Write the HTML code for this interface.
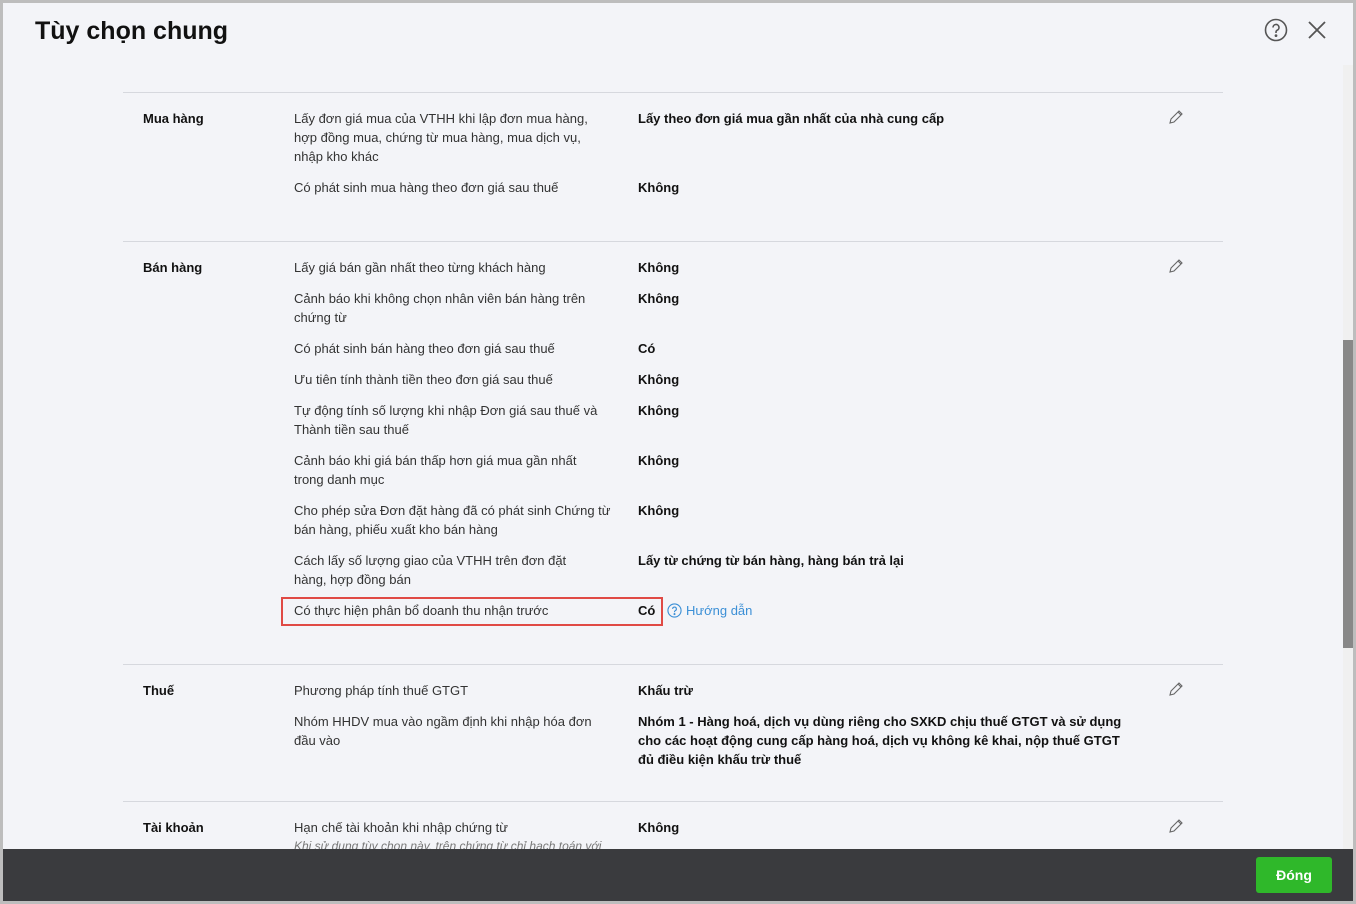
<!DOCTYPE html>
<html><head><meta charset="utf-8"><style>
*{margin:0;padding:0;box-sizing:border-box}
body{width:1356px;height:904px;overflow:hidden;background:#bdbdbd;font-family:"Liberation Sans","Noto Sans CJK SC",sans-serif;font-size:13px;color:#212121;position:relative}
.win{position:absolute;left:3px;top:3px;width:1350px;height:898px;background:#f3f4f8;overflow:hidden}
h1{position:absolute;left:32px;top:14px;font-size:25px;font-weight:bold;color:#111}
.t{position:absolute;line-height:19px}
.d{left:291px;width:318px;color:#333}
.v{left:635px;font-weight:bold;color:#111}
.l{left:140px;font-weight:bold;color:#111}
.hr{position:absolute;left:120px;width:1100px;height:1px;background:#d6d8de}
.pen{position:absolute;left:1165px}
.sb{position:absolute;left:1340px;top:62px;width:10px;height:840px;background:#f0f0f0}
.th{position:absolute;left:1340px;top:337px;width:10px;height:308px;background:#888}
.foot{position:absolute;left:0;top:846px;width:1350px;height:52px;background:#3a3b3e}
.btn{position:absolute;left:1253px;top:854px;width:76px;height:36px;background:#2fb82a;border-radius:3px;color:#fff;font-weight:bold;font-size:14px;text-align:center;line-height:36px}
</style></head><body><div class="win">
<h1>Tùy chọn chung</h1>
<svg style="position:absolute;left:1261px;top:15px" width="24" height="24" viewBox="0 0 24 24" fill="none" stroke="#555" stroke-width="1.6"><circle cx="12" cy="12" r="10.5"/><path d="M9 9.5a3 3 0 1 1 4 2.8c-.8.4-1 1-1 2v.7"/><circle cx="12" cy="17.6" r=".6" fill="#555"/></svg>
<svg style="position:absolute;left:1304px;top:17px" width="20" height="20" viewBox="0 0 20 20" stroke="#555" stroke-width="1.8"><path d="M2 2L18 18M18 2L2 18"/></svg>
<div class="sb"></div><div class="th"></div>

<div class="hr" style="top:89px"></div>
<div class="t l" style="top:106px">Mua hàng</div>
<div class="t d" style="top:106px;width:312px">Lấy đơn giá mua của VTHH khi lập đơn mua hàng, hợp đồng mua, chứng từ mua hàng, mua dịch vụ, nhập kho khác</div>
<div class="t v" style="top:106px">Lấy theo đơn giá mua gần nhất của nhà cung cấp</div>
<div class="t d" style="top:175px">Có phát sinh mua hàng theo đơn giá sau thuế</div>
<div class="t v" style="top:175px">Không</div>

<div class="hr" style="top:238px"></div>
<div class="t l" style="top:255px">Bán hàng</div>
<div class="t d" style="top:255px">Lấy giá bán gần nhất theo từng khách hàng</div><div class="t v" style="top:255px">Không</div>
<div class="t d" style="top:286px">Cảnh báo khi không chọn nhân viên bán hàng trên chứng từ</div><div class="t v" style="top:286px">Không</div>
<div class="t d" style="top:336px">Có phát sinh bán hàng theo đơn giá sau thuế</div><div class="t v" style="top:336px">Có</div>
<div class="t d" style="top:367px">Ưu tiên tính thành tiền theo đơn giá sau thuế</div><div class="t v" style="top:367px">Không</div>
<div class="t d" style="top:398px">Tự động tính số lượng khi nhập Đơn giá sau thuế và Thành tiền sau thuế</div><div class="t v" style="top:398px">Không</div>
<div class="t d" style="top:448px;width:300px">Cảnh báo khi giá bán thấp hơn giá mua gần nhất trong danh mục</div><div class="t v" style="top:448px">Không</div>
<div class="t d" style="top:498px">Cho phép sửa Đơn đặt hàng đã có phát sinh Chứng từ bán hàng, phiếu xuất kho bán hàng</div><div class="t v" style="top:498px">Không</div>
<div class="t d" style="top:548px;width:300px">Cách lấy số lượng giao của VTHH trên đơn đặt hàng, hợp đồng bán</div><div class="t v" style="top:548px">Lấy từ chứng từ bán hàng, hàng bán trả lại</div>
<div style="position:absolute;left:278px;top:594px;width:382px;height:29px;border:2px solid #e04a45"></div>
<div class="t d" style="top:598px;width:340px">Có thực hiện phân bổ doanh thu nhận trước</div><div class="t v" style="top:598px">Có</div>
<svg style="position:absolute;left:664px;top:600px" width="15" height="15" viewBox="0 0 16 16" fill="none" stroke="#3b8fd6" stroke-width="1.2"><circle cx="8" cy="8" r="7"/><path d="M6 6.3a2 2 0 1 1 2.7 1.9c-.5.3-.7.6-.7 1.3v.4"/><circle cx="8" cy="11.8" r=".5" fill="#3b8fd6"/></svg>
<div class="t" style="top:598px;left:683px;color:#3b8fd6">Hướng dẫn</div>

<div class="hr" style="top:661px"></div>
<div class="t l" style="top:678px">Thuế</div>
<div class="t d" style="top:678px">Phương pháp tính thuế GTGT</div><div class="t v" style="top:678px">Khấu trừ</div>
<div class="t d" style="top:709px">Nhóm HHDV mua vào ngầm định khi nhập hóa đơn đầu vào</div>
<div class="t v" style="top:709px;width:490px">Nhóm 1 - Hàng hoá, dịch vụ dùng riêng cho SXKD chịu thuế GTGT và sử dụng cho các hoạt động cung cấp hàng hoá, dịch vụ không kê khai, nộp thuế GTGT đủ điều kiện khấu trừ thuế</div>

<div class="hr" style="top:798px"></div>
<div class="t l" style="top:815px">Tài khoản</div>
<div class="t d" style="top:815px">Hạn chế tài khoản khi nhập chứng từ</div><div class="t v" style="top:815px">Không</div>
<div class="t d" style="top:834px;width:400px;font-style:italic;color:#777;font-size:12px">Khi sử dụng tùy chọn này, trên chứng từ chỉ hạch toán với</div>

<svg class="pen" style="top:106px" width="16" height="16" viewBox="0 0 16 16" fill="none" stroke="#666" stroke-width="1.1"><path d="M2 14l1-4 8-8 3 3-8 8z M10 3l3 3"/></svg>
<svg class="pen" style="top:255px" width="16" height="16" viewBox="0 0 16 16" fill="none" stroke="#666" stroke-width="1.1"><path d="M2 14l1-4 8-8 3 3-8 8z M10 3l3 3"/></svg>
<svg class="pen" style="top:678px" width="16" height="16" viewBox="0 0 16 16" fill="none" stroke="#666" stroke-width="1.1"><path d="M2 14l1-4 8-8 3 3-8 8z M10 3l3 3"/></svg>
<svg class="pen" style="top:815px" width="16" height="16" viewBox="0 0 16 16" fill="none" stroke="#666" stroke-width="1.1"><path d="M2 14l1-4 8-8 3 3-8 8z M10 3l3 3"/></svg>

<div class="foot"></div>
<div class="btn">Đóng</div>
</div></body></html>
